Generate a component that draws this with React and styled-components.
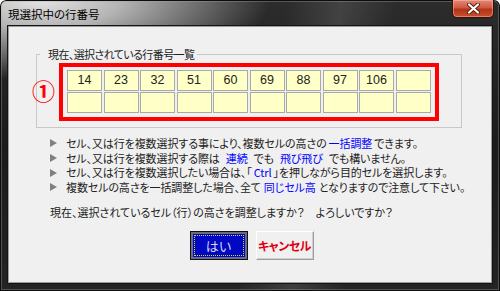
import React from "react";
import styled, { createGlobalStyle } from "styled-components";

const GlobalStyle = createGlobalStyle`
  html, body {
    margin: 0;
    padding: 0;
    background: #ffffff;
  }
  body {
    font-family: "Noto Sans CJK JP", "Noto Sans", sans-serif;
  }
`;

const Window = styled.div`
  width: 500px;
  height: 291px;
  box-sizing: border-box;
  display: flex;
  flex-direction: column;
  padding: 0 8px 8px;
  border-radius: 6px 6px 0 0;
  background:
    radial-gradient(ellipse 230px 80px at 40px 0px, #e4e4e4 0%, #b4b4b4 35%, rgba(60, 60, 60, 0) 100%),
    linear-gradient(100deg, rgba(0, 0, 0, 0) 52%, rgba(110, 110, 110, 0.35) 62%, rgba(0, 0, 0, 0) 72%),
    linear-gradient(180deg, #2c2c2c 0%, #1b1b1b 50%, #242424 100%);
  box-shadow: inset 0 0 0 1px #0c0c0c, inset 0 0 0 2px rgba(170, 170, 170, 0.35);
`;

const TitleBar = styled.div`
  height: 26px;
  flex: none;
  display: flex;
  justify-content: space-between;
  align-items: flex-start;
`;

const Title = styled.div`
  margin-top: 6px;
  font-size: 11.5px;
  line-height: 16px;
  color: #000;
  font-feature-settings: "palt";
`;

const CloseButton = styled.div`
  width: 42px;
  height: 18px;
  margin-right: -2px;
  box-sizing: border-box;
  display: flex;
  align-items: center;
  justify-content: center;
  border: 1px solid #3a0d06;
  border-top: none;
  border-radius: 0 0 5px 5px;
  background: linear-gradient(180deg, #e48a78 0%, #cf5840 45%, #b23418 55%, #c8502e 100%);
  box-shadow: inset 0 0 0 1px rgba(255, 200, 190, 0.45);
`;

const Client = styled.div`
  flex: 1;
  position: relative;
  background: #f0f0f0;
  border: 1px solid #9c9c9c;
  box-shadow: 0 0 0 1px #141414;
  display: flex;
  flex-direction: column;
`;

const Group = styled.fieldset`
  box-sizing: border-box;
  width: 426px;
  height: 81px;
  margin: 20px 0 0 27px;
  padding: 0;
  border: 1px solid #c8c8c8;
  min-inline-size: 0;
`;

const Legend = styled.legend`
  margin-left: 3px;
  padding: 0 3px 0 8px;
  font-size: 11px;
  line-height: 14px;
  letter-spacing: -0.6px;
  color: #222;
  font-feature-settings: "palt";
`;

const RedFrame = styled.div`
  width: fit-content;
  margin: 2px 0 0 22px;
  padding: 3px 4px 4px 4px;
  border: 4px solid #ff0000;
`;

const Grid = styled.div`
  display: grid;
  grid-template-columns: repeat(10, 35px);
  grid-auto-rows: 21px;
  column-gap: 1.5px;
  row-gap: 1px;
`;

const Cell = styled.div`
  box-sizing: border-box;
  background: #ffffc8;
  border: 1px solid #a9a9a9;
  display: flex;
  align-items: center;
  justify-content: center;
  padding-bottom: 2px;
  font-family: "Liberation Sans", Arial, sans-serif;
  font-size: 12.5px;
  color: #222;
`;

const Marker = styled.div`
  position: absolute;
  left: 23px;
  top: 52px;
  font-size: 23px;
  line-height: 23px;
  font-weight: bold;
  color: #ff0000;
`;

const Notes = styled.ul`
  list-style: none;
  margin: 8px 0 0 41px;
  padding: 0;
`;

const Note = styled.li`
  display: flex;
  align-items: center;
  height: 14.7px;
  line-height: 14.7px;
  font-size: 11px;
  letter-spacing: -0.1px;
  color: #222;
  font-feature-settings: "palt";
  white-space: nowrap;
`;

const Bullet = styled.span`
  width: 0;
  height: 0;
  margin-right: 9px;
  border-left: 7px solid #808080;
  border-top: 4px solid transparent;
  border-bottom: 4px solid transparent;
`;

const Hi = styled.span`
  color: #0000ff;
  margin: 0 ${(p) => p.$gap}px;
`;

const Question = styled.p`
  margin: 9px 0 0 41px;
  font-size: 11px;
  line-height: 16px;
  color: #222;
  font-feature-settings: "palt";
  white-space: nowrap;
`;

const Buttons = styled.div`
  display: flex;
  justify-content: center;
  gap: 8px;
  margin: 11px 0 0 3px;
`;

const Button = styled.div`
  box-sizing: border-box;
  width: 58px;
  height: 29px;
  display: flex;
  align-items: center;
  justify-content: center;
  font-size: ${(p) => (p.$primary ? 13 : 12)}px;
  font-feature-settings: "palt";
  ${(p) =>
    p.$primary
      ? `
    background: #0008c4;
    color: #d8d8f0;
    border: 1px solid #111;
    box-shadow: inset 0 0 0 2px #6c6c7c;
    outline: 1px dotted #d8d860;
    outline-offset: -5px;
  `
      : `
    background: #f0f0f0;
    color: #e00012;
    font-weight: bold;
    letter-spacing: -0.5px;
    border: 1px solid;
    border-color: #ffffff #9c9c9c #9c9c9c #ffffff;
    box-shadow: inset -1px -1px 0 #d0d0d0;
  `}
`;

const rows = ["14", "23", "32", "51", "60", "69", "88", "97", "106", ""];

const CloseIcon = () => (
  <svg width="13" height="11" viewBox="0 0 13 11">
    <path d="M2 1.5 L11 9.5 M11 1.5 L2 9.5" stroke="#5a1a10" strokeWidth="4" strokeLinecap="round" />
    <path d="M2 1.5 L11 9.5 M11 1.5 L2 9.5" stroke="#ffffff" strokeWidth="2.2" strokeLinecap="round" />
  </svg>
);

export default function App() {
  return (
    <>
      <GlobalStyle />
      <Window>
        <TitleBar>
          <Title>現選択中の行番号</Title>
          <CloseButton>
            <CloseIcon />
          </CloseButton>
        </TitleBar>
        <Client>
          <Group>
            <Legend>現在、選択されている行番号一覧</Legend>
            <RedFrame>
              <Grid>
                {rows.map((v, i) => (
                  <Cell key={"a" + i}>{v}</Cell>
                ))}
                {rows.map((_, i) => (
                  <Cell key={"b" + i} />
                ))}
              </Grid>
            </RedFrame>
          </Group>
          <Marker>①</Marker>
          <Notes>
            <Note>
              <Bullet />
              セル、又は行を複数選択する事により、複数セルの高さの<Hi $gap={2}>一括調整</Hi>できます。
            </Note>
            <Note>
              <Bullet />
              セル、又は行を複数選択する際は<Hi $gap={6}>連続</Hi>でも<Hi $gap={6}>飛び飛び</Hi>でも構いません。
            </Note>
            <Note>
              <Bullet />
              セル、又は行を複数選択したい場合は、「<Hi $gap={2}>Ctrl</Hi>」を押しながら目的セルを選択します。
            </Note>
            <Note>
              <Bullet />
              複数セルの高さを一括調整した場合、全て<Hi $gap={3}>同じセル高</Hi>となりますので注意して下さい。
            </Note>
          </Notes>
          <Question>現在、選択されているセル（行）の高さを調整しますか？　よろしいですか？</Question>
          <Buttons>
            <Button $primary>はい</Button>
            <Button>キャンセル</Button>
          </Buttons>
        </Client>
      </Window>
    </>
  );
}
